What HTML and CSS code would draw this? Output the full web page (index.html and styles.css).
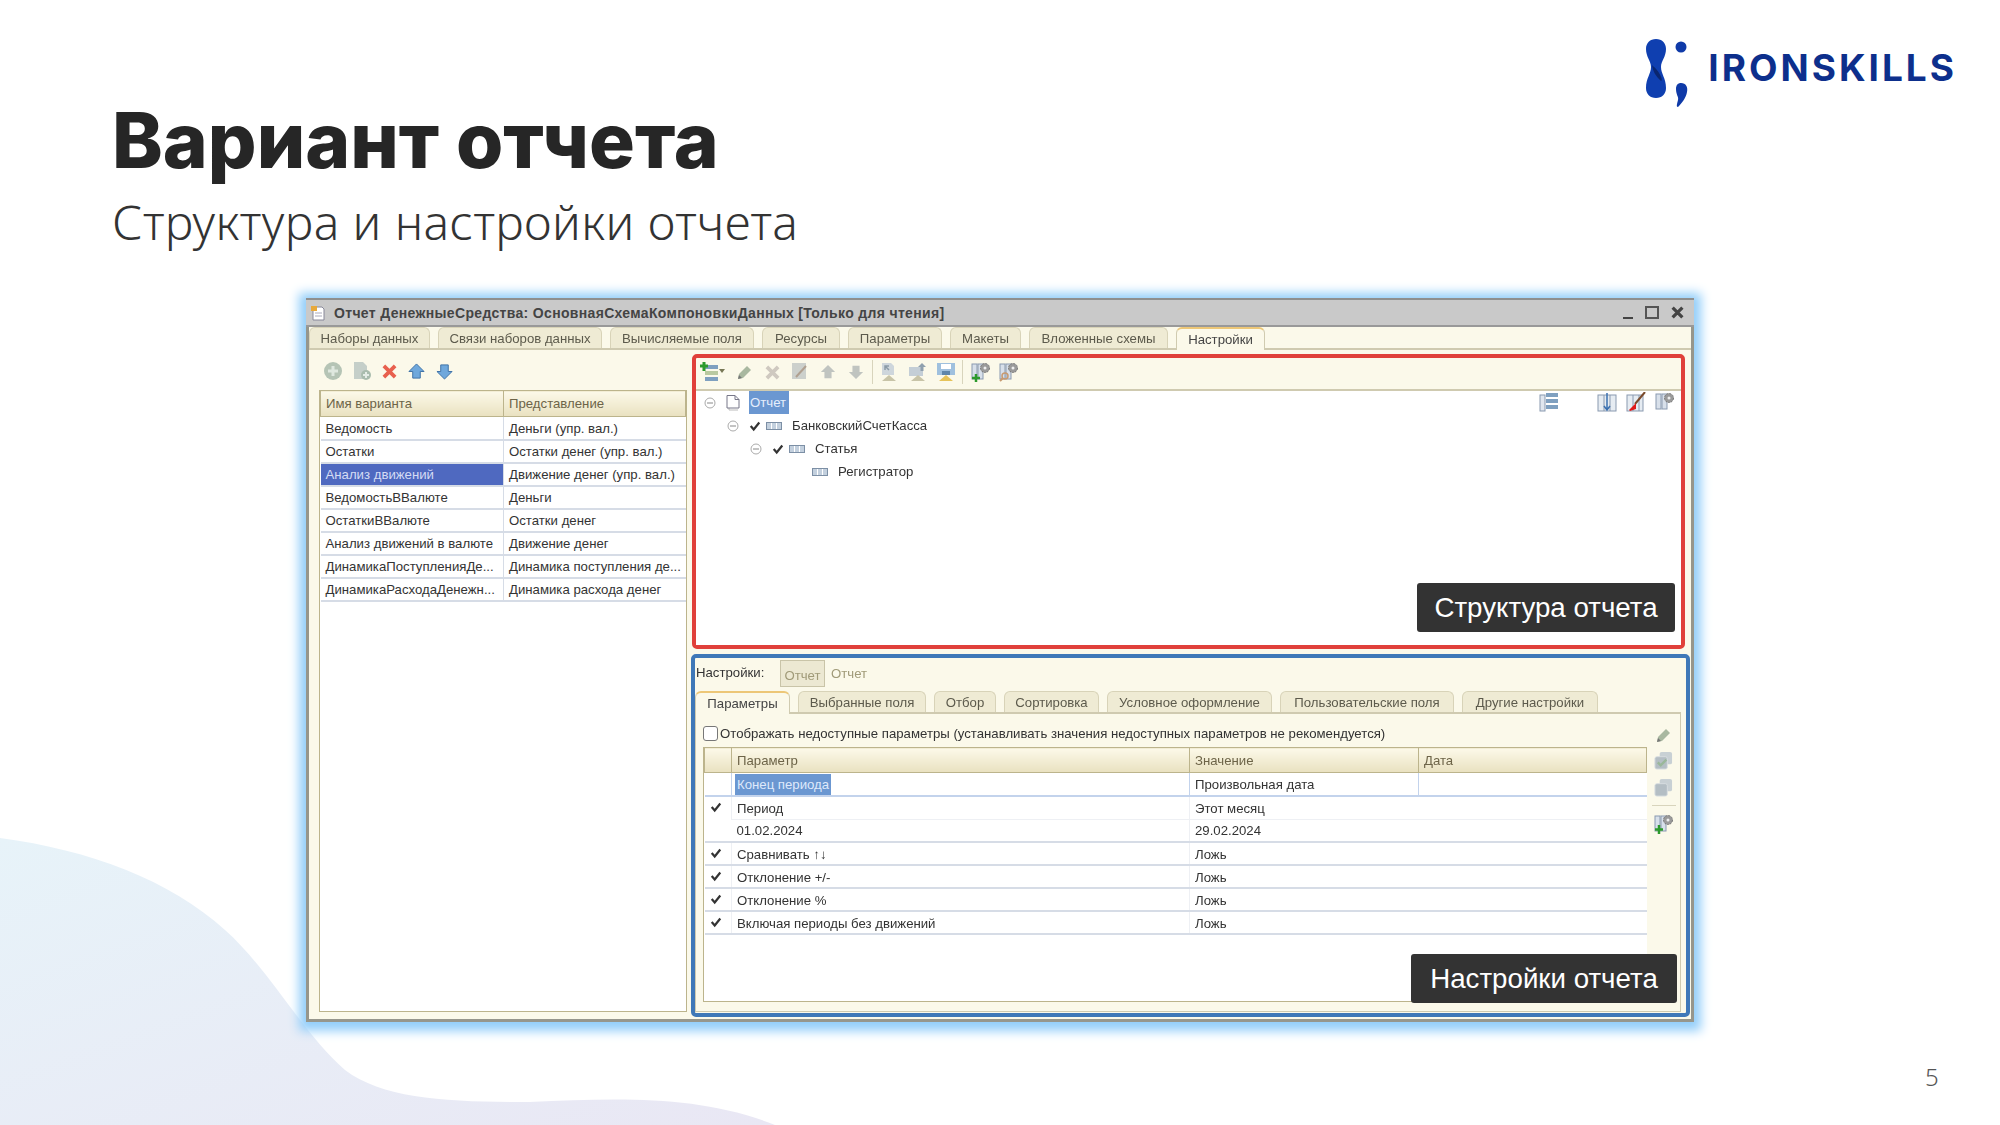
FILE: index.html
```html
<!DOCTYPE html>
<html lang="ru">
<head>
  <meta charset="UTF-8">
  <title>Вариант отчета</title>
  <link rel="stylesheet" href="styles.css">
</head>
<body>
  <svg class="defs" width="0" height="0">
    <symbol id="i-check" viewBox="0 0 14 14"><path d="M2 7l3.500 4L12 3" fill="none" stroke="#333" stroke-width="2.600"/></symbol>
    <symbol id="i-toggle" viewBox="0 0 12 12"><circle cx="6" cy="6" r="5" fill="#fff" stroke="#aaa"/><path d="M3 6h6" stroke="#888"/></symbol>
    <symbol id="i-field" viewBox="0 0 16 8"><rect x=".5" y=".5" width="15" height="7" fill="#c3d0de" stroke="#7c8fa5"/><path d="M5.500 1v6M10.500 1v6" stroke="#fff"/></symbol>
    <symbol id="i-doc" viewBox="0 0 16 16"><path d="M3 3.500V15h9" fill="none" stroke="#bbb"/><path d="M1 .5h8l4 4V13H1z" fill="#fff" stroke="#778"/><path d="M9 .5v4h4" fill="none" stroke="#778"/></symbol>
    <symbol id="i-up" viewBox="0 0 18 18"><path d="M9 1l8 8h-4v7H5V9H1z"/></symbol>
    <symbol id="i-down" viewBox="0 0 18 18"><path d="M9 17l8-8h-4V2H5v7H1z"/></symbol>
    <symbol id="i-x" viewBox="0 0 16 16"><path d="M2 2l12 12M14 2L2 14" fill="none" stroke="currentColor" stroke-width="4"/></symbol>
    <symbol id="i-pencil" viewBox="0 0 16 16"><path d="M1 15l1-5 8-8 4 4-8 8z" fill="#a9b8a0"/><path d="M1 15l1-4 3 3z" fill="#777"/></symbol>
    <symbol id="i-gear" viewBox="0 0 20 20"><rect x="1" y="2" width="5" height="15" fill="#d8e0ea" stroke="#8a9ab0"/><rect x="7" y="2" width="5" height="15" fill="#d8e0ea" stroke="#8a9ab0"/><circle cx="14" cy="6" r="4.500" fill="#9a9a9a" stroke="#777" stroke-dasharray="2 1"/><circle cx="14" cy="6" r="1.500" fill="#eee"/></symbol>
    <symbol id="i-stack" viewBox="0 0 20 20"><rect x="6" y="1" width="13" height="13" rx="2" fill="#c8d0d4"/><rect x="1" y="6" width="13" height="13" rx="2" fill="#b4bec4" stroke="#d8dde0"/></symbol>
  </svg>

  <div class="slide">
    <svg class="blob" viewBox="0 0 800 300" width="800" height="300">
      <defs>
        <linearGradient id="blob-fill" x1="0" y1="0" x2="1" y2="1">
          <stop offset="0" stop-color="#e7f3f9"/>
          <stop offset="1" stop-color="#e9e7f4"/>
        </linearGradient>
      </defs>
      <path d="M0 13C90 25 170 55 225 105C270 145 300 205 345 245C385 275 450 277 530 277C620 273 700 270 775 300H0z" fill="url(#blob-fill)"/>
    </svg>

    <header class="top">
      <div class="heading">
        <h1>Вариант отчета</h1>
        <p class="subtitle">Структура и настройки отчета</p>
      </div>
      <div class="logo">
        <svg class="logo-mark" viewBox="0 0 44 70" width="44" height="70">
          <path d="M10 1C16 1 20 5 20 11C20 19 15 23 15 29C15 36 20 40 20 50C20 56 16 60 10 60C4 60 0 56 0 50C0 40 5 36 5 29C5 23 0 19 0 11C0 5 4 1 10 1z" fill="#0f3fb0"/>
          <path d="M6 27C9 30 13 33 15.500 40C16 42 16 44 14 42C10 38 7 34 6 27z" fill="#0a2670"/>
          <circle cx="35" cy="9" r="5.500" fill="#0f3aa8"/>
          <path d="M35 45C40 45 42 49 41 54C40 60 36 65 32 69C30 69 31 66 32 62C33 59 30 57 30 51C30 47 32 45 35 45z" fill="#0f3aa8"/>
        </svg>
        <span class="logo-text">IRONSKILLS</span>
      </div>
    </header>

    <section class="window">
      <div class="titlebar">
        <svg class="title-icon" viewBox="0 0 16 16" width="16" height="16"><path d="M3 2h9l2 2v11H3z" fill="#fff" stroke="#889"/><path d="M1 1h6v5H1z" fill="#e8a93a"/><path d="M5 8h7M5 11h7" stroke="#aab"/></svg>
        <span class="title-text">Отчет ДенежныеСредства: ОсновнаяСхемаКомпоновкиДанных [Только для чтения]</span>
        <span class="win-btns">
          <i class="win-min"></i>
          <i class="win-max"></i>
          <svg class="win-close" width="13" height="13"><use href="#i-x"/></svg>
        </span>
      </div>

      <div class="tabs tabs-main">
        <span class="tab w121">Наборы данных</span>
        <span class="tab w164">Связи наборов данных</span>
        <span class="tab w144">Вычисляемые поля</span>
        <span class="tab w78">Ресурсы</span>
        <span class="tab w94">Параметры</span>
        <span class="tab w71">Макеты</span>
        <span class="tab w139">Вложенные схемы</span>
        <span class="tab active w89">Настройки</span>
      </div>

      <div class="workspace">
        <div class="variants">
          <div class="toolbar left-tools">
            <svg width="18" height="18" viewBox="0 0 18 18"><circle cx="9" cy="9" r="9" fill="#b5c4b5"/><path d="M9 4v10M4 9h10" stroke="#dfe8df" stroke-width="3"/></svg>
            <svg width="18" height="18" viewBox="0 0 18 18"><path d="M1 0h9l4 4v13H1z" fill="#c5cfc9"/><circle cx="13" cy="13" r="5" fill="#a9bcae"/><path d="M13 10v6M10 13h6" stroke="#e4ece6" stroke-width="2"/></svg>
            <svg class="red-x" width="15" height="15"><use href="#i-x"/></svg>
            <svg class="arrow-blue" width="17" height="17"><use href="#i-up"/></svg>
            <svg class="arrow-blue" width="17" height="17"><use href="#i-down"/></svg>
          </div>
          <div class="variants-box">
            <table class="grid">
              <thead>
                <tr><th class="col-name">Имя варианта</th><th>Представление</th></tr>
              </thead>
              <tbody>
                <tr><td>Ведомость</td><td>Деньги (упр. вал.)</td></tr>
                <tr><td>Остатки</td><td>Остатки денег (упр. вал.)</td></tr>
                <tr><td class="picked">Анализ движений</td><td>Движение денег (упр. вал.)</td></tr>
                <tr><td>ВедомостьВВалюте</td><td>Деньги</td></tr>
                <tr><td>ОстаткиВВалюте</td><td>Остатки денег</td></tr>
                <tr><td>Анализ движений в валюте</td><td>Движение денег</td></tr>
                <tr><td>ДинамикаПоступленияДе...</td><td>Динамика поступления де...</td></tr>
                <tr><td>ДинамикаРасходаДенежн...</td><td>Динамика расхода денег</td></tr>
              </tbody>
            </table>
          </div>
        </div>

        <div class="panes">
          <div class="frame-red">
            <div class="toolbar tree-tools">
              <svg width="20" height="22" viewBox="0 0 20 22"><rect x="6" y="4" width="13" height="4" fill="#7fa0c0"/><rect x="6" y="10" width="13" height="4" fill="#b9c9a0"/><rect x="6" y="16" width="13" height="4" fill="#7fa0c0"/><path d="M5 1v9M1 5h8" stroke="#2c9a2c" stroke-width="3"/></svg>
              <i class="caret"></i>
              <svg width="16" height="16"><use href="#i-pencil"/></svg>
              <svg class="x-grey" width="15" height="15"><use href="#i-x"/></svg>
              <svg width="16" height="18" viewBox="0 0 16 18"><rect x="0" y="0" width="14" height="16" fill="#ccd0cc"/><path d="M4 14L14 3" stroke="#b0a090" stroke-width="2"/></svg>
              <svg class="arrow-grey" width="16" height="16"><use href="#i-up"/></svg>
              <svg class="arrow-grey" width="16" height="16"><use href="#i-down"/></svg>
              <i class="tool-sep"></i>
              <svg width="20" height="20" viewBox="0 0 20 20"><path d="M3 1h9l3 3v9H3z" fill="#ced6dc"/><path d="M10 4H6v4M6 4l4 4" fill="none" stroke="#8a9aa6" stroke-width="1.500"/><path d="M3 19l7-6 7 6z" fill="#c8c4a8"/></svg>
              <svg class="load-b" width="20" height="20" viewBox="0 0 20 20"><rect x="1" y="5" width="14" height="9" fill="#c4ced6"/><path d="M14 1l4 4h-2.500v4h-3V5H10z" fill="#8fa0ae"/><path d="M3 19l7-6 7 6z" fill="#c8c4a8"/></svg>
              <svg class="load-c" width="20" height="20" viewBox="0 0 20 20"><rect x="1" y="1" width="18" height="12" fill="#9fc0de"/><rect x="5" y="2" width="10" height="5" fill="#fff"/><rect x="6" y="9" width="8" height="4" fill="#5f86ab"/><path d="M3 19l7-6 7 6z" fill="#e6c35a"/></svg>
              <i class="tool-sep sep-b"></i>
              <svg class="load-c" width="20" height="20" viewBox="0 0 20 20"><use href="#i-gear"/><path d="M5 12v8M1 16h8" stroke="#2c9a2c" stroke-width="2.500"/></svg>
              <svg class="load-c" width="20" height="20" viewBox="0 0 20 20"><use href="#i-gear"/><circle cx="6" cy="14" r="3" fill="none" stroke="#c89a70" stroke-width="1.500"/><path d="M4 16l-3 3" stroke="#c89a70" stroke-width="2"/></svg>
            </div>
            <div class="tree">
              <div class="tree-row lv0">
                <svg class="toggle" width="12" height="12"><use href="#i-toggle"/></svg>
                <svg class="doc" width="16" height="16"><use href="#i-doc"/></svg>
                <span class="tree-picked">Отчет</span>
              </div>
              <div class="tree-row lv1">
                <svg class="toggle" width="12" height="12"><use href="#i-toggle"/></svg>
                <svg class="tick" width="12" height="12"><use href="#i-check"/></svg>
                <svg class="fld" width="16" height="8"><use href="#i-field"/></svg>
                <span>БанковскийСчетКасса</span>
              </div>
              <div class="tree-row lv2">
                <svg class="toggle" width="12" height="12"><use href="#i-toggle"/></svg>
                <svg class="tick" width="12" height="12"><use href="#i-check"/></svg>
                <svg class="fld" width="16" height="8"><use href="#i-field"/></svg>
                <span>Статья</span>
              </div>
              <div class="tree-row lv3">
                <svg class="fld" width="16" height="8"><use href="#i-field"/></svg>
                <span>Регистратор</span>
              </div>
              <div class="tree-icons">
                <svg width="20" height="20" viewBox="0 0 20 20"><rect x="1" y="3" width="5" height="16" fill="#e0e6ee" stroke="#8a9ab0"/><rect x="7" y="1" width="12" height="4" fill="#7fa0c0"/><rect x="7" y="7" width="12" height="4" fill="#7fa0c0"/><rect x="7" y="13" width="12" height="4" fill="#7fa0c0"/></svg>
                <svg class="ti-b" width="20" height="20" viewBox="0 0 20 20"><rect x="1" y="3" width="18" height="16" fill="#e6ecf2" stroke="#8a9ab0"/><path d="M7 3v16M13 3v16" stroke="#8a9ab0"/><path d="M10 1v16M7 14l3 4 3-4" fill="none" stroke="#3a70b0" stroke-width="1.500"/></svg>
                <svg width="20" height="20" viewBox="0 0 20 20"><rect x="1" y="3" width="16" height="16" fill="#e6ecf2" stroke="#8a9ab0"/><path d="M7 3v16M13 3v16" stroke="#8a9ab0"/><path d="M19 0L9 12" stroke="#7a4a2a" stroke-width="2"/><path d="M10 11l-7 7 1 1 6-2z" fill="#e01818"/></svg>
                <svg width="20" height="20"><use href="#i-gear"/></svg>
              </div>
              <div class="callout callout-tree">Структура отчета</div>
            </div>
          </div>

          <div class="frame-blue">
            <div class="setting-row">
              <span class="setting-label">Настройки:</span>
              <span class="setting-btn">Отчет</span>
              <span class="setting-name">Отчет</span>
            </div>
            <div class="tabs tabs-inner">
              <span class="tab active w95">Параметры</span>
              <span class="tab w128">Выбранные поля</span>
              <span class="tab w62">Отбор</span>
              <span class="tab w95">Сортировка</span>
              <span class="tab w165">Условное оформление</span>
              <span class="tab w174">Пользовательские поля</span>
              <span class="tab w136">Другие настройки</span>
            </div>
            <div class="params">
              <div class="params-main">
                <label class="show-all"><i class="box"></i>Отображать недоступные параметры (устанавливать значения недоступных параметров не рекомендуется)</label>
                <div class="params-table">
                  <table class="grid params-grid">
                    <thead>
                      <tr><th class="col-tick"></th><th class="col-param">Параметр</th><th class="col-value">Значение</th><th>Дата</th></tr>
                    </thead>
                    <tbody>
                      <tr class="row-first"><td></td><td><span class="param-picked">Конец периода</span></td><td>Произвольная дата</td><td></td></tr>
                      <tr class="row-soft"><td rowspan="2" class="cell-tick"><svg width="12" height="12"><use href="#i-check"/></svg></td><td>Период</td><td colspan="2">Этот месяц</td></tr>
                      <tr><td>01.02.2024</td><td colspan="2">29.02.2024</td></tr>
                      <tr><td class="cell-tick"><svg width="12" height="12"><use href="#i-check"/></svg></td><td>Сравнивать ↑↓</td><td colspan="2">Ложь</td></tr>
                      <tr><td class="cell-tick"><svg width="12" height="12"><use href="#i-check"/></svg></td><td>Отклонение +/-</td><td colspan="2">Ложь</td></tr>
                      <tr><td class="cell-tick"><svg width="12" height="12"><use href="#i-check"/></svg></td><td>Отклонение %</td><td colspan="2">Ложь</td></tr>
                      <tr><td class="cell-tick"><svg width="12" height="12"><use href="#i-check"/></svg></td><td>Включая периоды без движений</td><td colspan="2">Ложь</td></tr>
                    </tbody>
                  </table>
                </div>
              </div>
              <div class="params-tools">
                <svg width="16" height="16"><use href="#i-pencil"/></svg>
                <svg width="19" height="19" viewBox="0 0 20 20"><use href="#i-stack"/><path d="M4 12l3 3 6-6" fill="none" stroke="#9ab89a" stroke-width="2.500"/></svg>
                <svg width="19" height="19"><use href="#i-stack"/></svg>
                <i class="tools-line"></i>
                <svg width="20" height="20" viewBox="0 0 20 20"><use href="#i-gear"/><path d="M5 11v9M1 15.500h8" stroke="#2c9a2c" stroke-width="2.500"/></svg>
              </div>
            </div>
            <div class="callout callout-settings">Настройки отчета</div>
          </div>
        </div>
      </div>
    </section>

    <span class="page-num">5</span>
  </div>
</body>
</html>
```

FILE: styles.css
```css
/* Slide */
* {
  box-sizing: border-box;
}

body {
  margin: 0;
  background-color: #ffffff;
  font-family: "Liberation Sans", Arial, sans-serif;
}

.defs {
  display: block;
  height: 0;
}

.slide {
  position: relative;
  width: 2000px;
  height: 1125px;
  overflow: hidden;
  background-color: #ffffff;
}

.blob {
  position: absolute;
  left: 0;
  bottom: 0;
}

.top {
  position: relative;
  display: flex;
  justify-content: space-between;
  height: 298px;
  padding: 0 43px 0 112px;
}

.heading {
  padding-top: 92px;
}

h1 {
  margin: 0;
  font-family: Inter, sans-serif;
  font-size: 76.500px;
  font-weight: 800;
  line-height: 96px;
  color: #262626;
}

.subtitle {
  margin: 0;
  padding-top: 4px;
  font-family: "Noto Sans", sans-serif;
  font-size: 48px;
  font-weight: 300;
  line-height: 60px;
  letter-spacing: 0.4px;
  color: #333333;
}

.logo {
  display: flex;
  align-items: flex-start;
  gap: 18px;
  padding-top: 38px;
}

.logo-text {
  margin-top: 7px;
  font-family: Inter, sans-serif;
  font-size: 37px;
  font-weight: 700;
  line-height: 46px;
  letter-spacing: 3px;
  color: #0d2f8c;
}

.page-num {
  position: absolute;
  left: 1925px;
  top: 1060px;
  font-family: "Noto Sans", sans-serif;
  font-size: 24px;
  font-weight: 300;
  color: #555555;
}

/* 1C window */
.window {
  position: relative;
  width: 1388px;
  height: 724px;
  margin-left: 306px;
  border: 3px solid #96968c;
  border-top: 0;
  background-color: #fbf9ea;
  box-shadow: 0 2px 10px 7px #93cefa;
  font-size: 13.200px;
  color: #333333;
  filter: blur(0.6px);
}

.titlebar {
  display: flex;
  align-items: center;
  height: 29px;
  margin: 0 -3px;
  padding: 0 10px 0 4px;
  background-color: #c9c9c9;
  border-top: 2px solid #8f8f8f;
  border-bottom: 2px solid #999999;
}

.title-icon {
  margin-right: 8px;
}

.title-text {
  font-weight: bold;
  font-size: 14px;
  letter-spacing: 0.33px;
  color: #444444;
}

.win-btns {
  display: flex;
  align-items: flex-end;
  gap: 12px;
  margin-left: auto;
  color: #444444;
}

.win-min {
  width: 10px;
  height: 2px;
  background-color: #444444;
}

.win-max {
  width: 14px;
  height: 13px;
  border: 2px solid #555555;
}

/* Tabs */
.tabs {
  display: flex;
  align-items: flex-end;
  gap: 8px;
}

.tabs-main {
  height: 23px;
  border-bottom: 2px solid #cfcab0;
}

.tabs-inner {
  height: 21px;
}

.tab {
  height: 100%;
  padding-top: 3px;
  border: 1px solid #d8d3b8;
  border-bottom: 0;
  border-radius: 6px 6px 0 0;
  background-color: #efebd4;
  text-align: center;
  color: #5c5a4c;
}

.tab.active {
  height: calc(100% + 2px);
  margin-bottom: -2px;
  background-color: #fbf9ea;
  border-top: 2px solid #edc777;
  border-color: #d0cbb0;
  border-top-color: #edc777;
  color: #444444;
}

.w62 { width: 62px; }
.w71 { width: 71px; }
.w78 { width: 78px; }
.w89 { width: 89px; }
.w94 { width: 94px; }
.w95 { width: 95px; }
.w121 { width: 121px; }
.w128 { width: 128px; }
.w136 { width: 136px; }
.w139 { width: 139px; }
.w144 { width: 144px; }
.w164 { width: 164px; }
.w165 { width: 165px; }
.w174 { width: 174px; }

/* Body of the window */
.workspace {
  display: flex;
  height: 669px;
  padding-top: 2px;
}

.variants {
  display: flex;
  flex-direction: column;
  width: 378px;
  margin-right: 4px;
  padding: 0 0 7px 10px;
}

.toolbar {
  display: flex;
  align-items: center;
}

.left-tools {
  flex: none;
  gap: 11px;
  height: 38px;
  padding-left: 5px;
}

.variants-box {
  flex: 1;
  border: 1px solid #bcb48c;
  border-top: 0;
  background-color: #ffffff;
}

.red-x {
  color: #e8604e;
}

.arrow-blue {
  fill: #6fa8dc;
  stroke: #3a6ea5;
}

.arrow-grey {
  fill: #c0c4c0;
}

.x-grey {
  color: #cfc9c0;
}

/* Tables */
.grid {
  width: 100%;
  border-collapse: collapse;
  table-layout: fixed;
  background-color: #ffffff;
}

.grid th {
  height: 26px;
  padding: 0 5px;
  border: 1px solid #bcb48c;
  background-image: linear-gradient(#fcf9e9, #e9e1c0);
  text-align: left;
  font-weight: normal;
  color: #6d6448;
}

.grid td {
  height: 23px;
  padding: 1px 5px 0;
  border-bottom: 2px solid #d6dce6;
  white-space: nowrap;
  overflow: hidden;
}

.col-name {
  width: 183px;
}

.grid tbody td:first-child {
  border-right: 1px solid #d6dce6;
}

.grid td.picked {
  background-color: #4f69c0;
  color: #d5dcf4;
}

/* Red frame */
.panes {
  width: 999px;
}

.frame-red {
  width: 993px;
  height: 295px;
  margin: 2px 0 5px 1px;
  border: 4px solid #e0403a;
  border-radius: 5px;
}

.tree-tools {
  gap: 12px;
  height: 33px;
  padding: 0 0 3px 3px;
  border-bottom: 2px solid #cfcab0;
}

.caret {
  width: 0;
  height: 0;
  margin-left: -12px;
  border: 3px solid transparent;
  border-top: 4px solid #777755;
}

.tool-sep {
  width: 1px;
  height: 24px;
  margin: 0 -6px 0 -4px;
  background-color: #d8d4bc;
}

.load-b {
  margin-left: -3px;
}

.load-c {
  margin-left: -4px;
}

.sep-b {
  margin: 0 0 0 -6px;
}

.tree {
  position: relative;
  height: 254px;
  background-color: #ffffff;
}

.tree-row {
  display: flex;
  align-items: center;
  height: 23px;
}

.lv0 { padding-left: 8px; }
.lv1 { padding-left: 31px; }
.lv2 { padding-left: 54px; }
.lv3 { padding-left: 116px; }

.toggle {
  margin-right: 10px;
}

.doc {
  margin-right: 7px;
}

.tick {
  margin: 0 5px 0 0;
}

.fld {
  margin-right: 10px;
}

.tree-picked {
  height: 23px;
  padding: 4px 3px 0 1px;
  background-color: #6b97d1;
  color: #e6eefc;
}

.tree-icons {
  position: absolute;
  top: 1px;
  left: 843px;
  display: flex;
  gap: 9px;
}

.ti-b {
  margin-left: 29px;
}

.callout {
  position: absolute;
  border-radius: 3px;
  background-color: #333333;
  color: #ffffff;
  font-size: 27.700px;
  line-height: 50px;
  text-align: center;
}

.callout-tree {
  top: 192px;
  left: 721px;
  width: 258px;
  height: 49px;
}

.callout-settings {
  top: 296px;
  left: 716px;
  width: 266px;
  height: 49px;
}

/* Blue frame */
.frame-blue {
  position: relative;
  width: 999px;
  height: 363px;
  border: 4px solid #3f78b8;
  border-radius: 5px;
}

.setting-row {
  display: flex;
  align-items: center;
  height: 33px;
  padding: 2px 0 6px 1px;
}

.setting-label {
  width: 84px;
}

.setting-btn {
  width: 45px;
  height: 27px;
  margin: 2px 6px 0 0;
  padding-top: 7px;
  border: 1px solid #c9c4a8;
  background-color: #ece8d2;
  text-align: center;
  color: #a09a78;
}

.setting-name {
  margin-top: 2px;
  color: #a09a78;
}

.params {
  display: flex;
  width: 986px;
  height: 300px;
  padding: 11px 0 9px 7px;
  border: 1px solid #cfcab0;
  border-top: 2px solid #cfcab0;
}

.params-main {
  display: flex;
  flex-direction: column;
  width: 946px;
}

.show-all {
  display: flex;
  align-items: center;
  gap: 2px;
  height: 16px;
  margin-bottom: 6px;
  white-space: nowrap;
}

.box {
  width: 15px;
  height: 15px;
  border: 1px solid #777777;
  border-radius: 3px;
  background-color: #ffffff;
}

.params-table {
  flex: 1;
  border-bottom: 1px solid #bcb48c;
  border-left: 1px solid #bcb48c;
  background-color: #ffffff;
}

.col-tick { width: 27px; }
.col-param { width: 458px; }
.col-value { width: 229px; }

.params-grid th {
  height: 25px;
}

.params-grid td:not(:first-child) {
  border-left: 1px solid #eef0f4;
}

.params-grid tbody td:first-child {
  border-right: 0;
}

.row-first td {
  border-bottom-color: #c3d3ec;
}

.row-first td:not(:first-child) {
  border-left-color: #c3d3ec;
}

.row-soft td:not(.cell-tick) {
  border-bottom: 1px solid #eef0f4;
}

.grid td.cell-tick {
  vertical-align: top;
  padding: 4px 0 0 5px;
}

.param-picked {
  display: inline-block;
  height: 21px;
  padding: 3px 2px 0;
  margin-left: -2px;
  background-color: #6b97d1;
  color: #dfe9fb;
}

.params-tools {
  display: flex;
  flex-direction: column;
  align-items: center;
  gap: 8px;
  width: 33px;
  padding-top: 2px;
}

.tools-line {
  width: 24px;
  height: 1px;
  background-color: #d8d4bc;
}
```
